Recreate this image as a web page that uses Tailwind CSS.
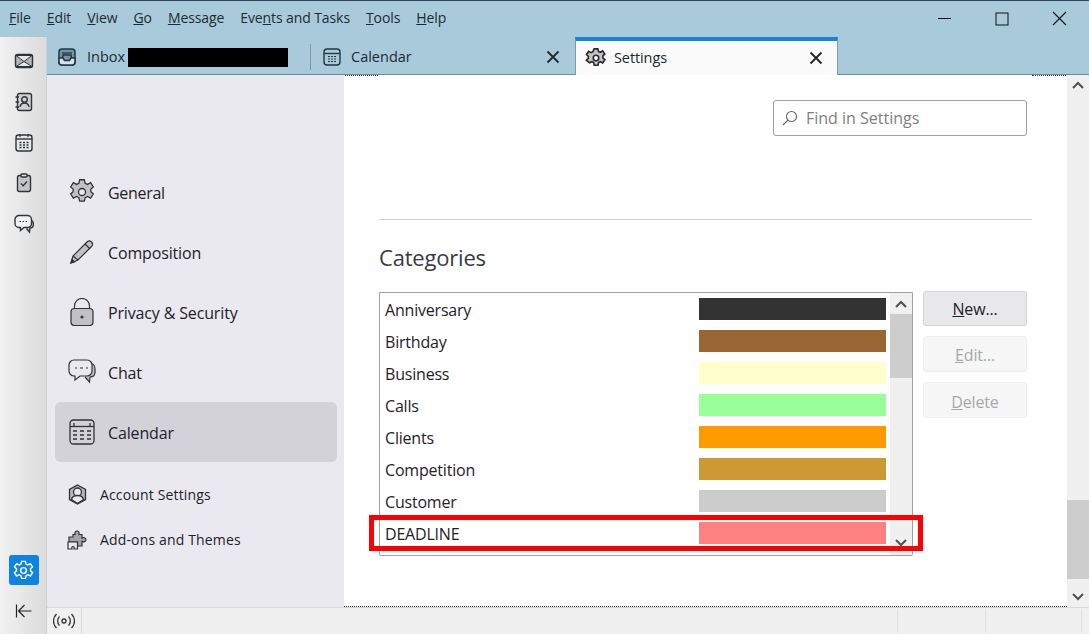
<!doctype html>
<html>
<head>
<meta charset="utf-8">
<script src="https://cdn.jsdelivr.net/npm/@tailwindcss/browser@4"></script>
</head>
<body class="w-[1089px] h-[634px] overflow-hidden bg-white font-['Open_Sans',sans-serif] text-[#1f2128]">
<div class="relative flex flex-col h-[634px]">
    <!-- title bar with menu -->
    <div class="flex items-center h-[37px] shrink-0 bg-[#a9cadb] border-t border-[#2e4558] pl-[9px] pb-[1px] text-[14px] text-[#1c2b33]">
        <div class="flex gap-[16px] tracking-[-0.1px] mb-[3px]">
            <span><u>F</u>ile</span>
            <span><u>E</u>dit</span>
            <span><u>V</u>iew</span>
            <span><u>G</u>o</span>
            <span><u>M</u>essage</span>
            <span>Eve<u>n</u>ts and Tasks</span>
            <span><u>T</u>ools</span>
            <span><u>H</u>elp</span>
        </div>
        <div class="ml-auto flex items-center gap-[43px] pr-[22px]">
            <svg width="16" height="16" viewBox="0 0 16 16"><path d="M2 7.500h13" stroke="#111" stroke-width="1"/></svg>
            <svg width="14" height="14" viewBox="0 0 14 14"><rect x="1" y="1" width="12" height="12" fill="none" stroke="#111"/></svg>
            <svg width="15" height="15" viewBox="0 0 15 15"><path d="M1 1l13 13M14 1L1 14" stroke="#111" stroke-width="1.100"/></svg>
        </div>
    </div>

    <div class="flex flex-1 min-h-0">
        <!-- spaces toolbar -->
        <div class="w-[47px] shrink-0 flex flex-col items-center bg-gradient-to-r from-[#f1f1f1] to-[#dcdcdc] border-r border-[#d0d0d0] pl-[1px] pt-[14px]">
            <div class="flex flex-col gap-[20.750px] text-[#2e3438]">
                <svg width="20" height="20" viewBox="0 0 20 20" fill="none" stroke="currentColor" stroke-width="1.400"><rect x="1.500" y="3.500" width="17" height="13" rx="2" fill="#b4b4b4"/><path d="M2 4.500l8 6 8-6z" fill="#e6e6e6" stroke-width="1"/><path d="M2 15.500l8-5 8 5z" fill="#e6e6e6" stroke-width="1"/></svg>
                <svg width="20" height="20" viewBox="0 0 20 20" fill="none" stroke="currentColor" stroke-width="1.400"><rect x="3.500" y="1.500" width="14" height="17" rx="2" fill="#d0d0d0"/><circle cx="10.500" cy="7.500" r="2.800"/><path d="M6 15c.5-3 2-4 4.500-4s4 1 4.500 4M1.500 5h3.500M1.500 10h3.500M1.500 15h3.500"/></svg>
                <svg width="20" height="20" viewBox="0 0 20 20" fill="none" stroke="currentColor" stroke-width="1.400"><rect x="2" y="2" width="16" height="16" rx="2.500" fill="#e8e8e8"/><path d="M2 6h16" /><path d="M6 1v3M14 1v3" stroke-width="1.200"/><path d="M5.500 9.500h2M9 9.500h2M12.500 9.500h2M5.500 12h2M9 12h2M12.500 12h2M5.500 14.500h2M9 14.500h2M12.500 14.500h2" stroke-width="1.300"/></svg>
                <svg width="20" height="20" viewBox="0 0 20 20" fill="none" stroke="currentColor" stroke-width="1.400"><rect x="3.500" y="2.500" width="13" height="16" rx="2" fill="#c4c4c4"/><rect x="7" y="1" width="6" height="3" rx="1" fill="#e0e0e0"/><path d="M7 10.500l2.200 2.200L13 8.500"/></svg>
                <svg width="20" height="20" viewBox="0 0 20 20" fill="none" stroke="currentColor" stroke-width="1.400"><path d="M17 6c1.500 1 2.500 2 2.500 4 0 2.500-1.500 4-3.500 4l-.500 4-3-3.500" fill="#c8c8c8"/><path d="M5 1.500h8.500a4 4 0 0 1 4 4v4a4 4 0 0 1-4 4H10l-3.500 3v-3H5a4 4 0 0 1-4-4v-4a4 4 0 0 1 4-4z" fill="#f2f2f2"/><path d="M5.500 7.500h1.500M8.500 7.500h1.500M11.500 7.500h1.500" stroke-width="1.200"/></svg>
            </div>
            <div class="mt-auto flex items-center justify-center w-[30px] h-[30px] rounded-[3px] bg-[#0d84e3]">
                <svg width="23" height="23" viewBox="0 0 24 24" fill="none" stroke="#fff" stroke-width="1.500"><path d="M10 2.500h4l.6 2.800 2 .9 2.500-1.400 2.300 3.400-2.100 2 .1 2.200 2.100 1.900-2.300 3.400-2.600-1.300-1.900 1-.7 2.800h-4l-.7-2.800-1.900-1-2.600 1.300-2.300-3.400 2.100-1.900.1-2.200-2.100-2 2.300-3.400 2.500 1.400 2-.9z"/><circle cx="12" cy="12" r="3"/></svg>
            </div>
            <div class="h-[49px] pt-[2px] flex items-center justify-center">
                <svg width="18" height="16" viewBox="0 0 18 16" fill="none" stroke="#222" stroke-width="1.200"><path d="M1.500 1.500v13M16.500 8H3.500M9.500 2L3.500 8l6 6"/></svg>
            </div>
        </div>

        <div class="flex flex-col flex-1 min-w-0">
            <!-- tab bar -->
            <div class="flex h-[38px] shrink-0 bg-[#a9cadb] border-b border-[#6f8a99] text-[14.500px] text-[#1c2b33]">
                <div class="w-[263px] flex items-center pl-[11px] pt-[2px]">
                    <svg width="18" height="18" viewBox="0 0 18 18" fill="none" stroke="#263640" stroke-width="1.500"><rect x="1" y="1" width="16" height="16" rx="3" fill="#6f95a8"/><path d="M4 5h10" stroke-width="1.300"/><path d="M1 10h4l1.500 2.500h5L13 10h4v4a3 3 0 0 1-3 3H4a3 3 0 0 1-3-3z" fill="#d6e5ec"/><path d="M4.500 10l.5-3h8l.5 3"/></svg>
                    <span class="ml-[11px]">Inbox</span>
                    <span class="ml-[3px] w-[160px] h-[19px] mt-[1px] bg-black"></span>
                </div>
                <div class="w-[265px] flex items-center pl-[12px] pr-[15px] pt-[2px]">
                    <span class="w-px h-[26px] bg-[#7d98a6] -ml-[12px] mr-[12px]"></span>
                    <svg width="18" height="18" viewBox="0 0 18 18" fill="none" stroke="#263640" stroke-width="1.400"><rect x="1" y="1" width="16" height="16" rx="3"/><path d="M1 5.500h16"/><path d="M5 8.500h2M8 8.500h2M11 8.500h2M5 11h2M8 11h2M11 11h2M5 13.500h2M8 13.500h2M11 13.500h2" stroke-width="1.100"/></svg>
                    <span class="ml-[10px]">Calendar</span>
                    <svg class="ml-auto" width="14" height="14" viewBox="0 0 14 14"><path d="M1.500 1.500l11 11M12.500 1.500l-11 11" stroke="#1c2b33" stroke-width="1.800"/></svg>
                </div>
                <div class="w-[263px] h-[38px] flex items-center pl-[9px] pr-[14px] bg-[#fafafa] border-t-[4px] border-t-[#1582e0] border-x border-x-[#7d98a6]">
                    <svg class="-mt-[1px]" width="22" height="22" viewBox="0 0 24 24" fill="#c4c4c6" stroke="#2a2a2e" stroke-width="1.800"><path d="M10 2h4l.7 2.800 2 .9 2.500-1.400 2.400 3.400-2.100 2 .1 2.300 2.100 1.900-2.400 3.400-2.600-1.300-1.900 1-.7 2.900h-4l-.7-2.900-1.900-1-2.600 1.300L1.500 14.400l2.100-1.900.1-2.300-2.100-2 2.400-3.400 2.500 1.400 2-.9z"/><circle cx="12" cy="12" r="3" fill="#fff"/></svg>
                    <span class="ml-[7px] -mt-[1px] tracking-[-0.1px]">Settings</span>
                    <svg class="ml-auto" width="14" height="14" viewBox="0 0 14 14"><path d="M1.500 1.500l11 11M12.500 1.500l-11 11" stroke="#222" stroke-width="1.800"/></svg>
                </div>
            </div>

            <div class="flex flex-1 min-h-0">
                <!-- settings nav -->
                <div class="w-[297px] shrink-0 bg-[#e9e9ef] pl-[8px] pr-[7px] pt-[87px] text-[16px] tracking-[-0.15px]">
                    <div class="flex items-center h-[60px] pl-[13px] gap-[12px]">
                        <svg width="28" height="30" viewBox="0 0 24 24" fill="#c0c0c5" stroke="#333" stroke-width="1.100"><path d="M10 1.500h4l.7 3 2 1 2.700-1.500 2.300 3.600-2.200 2 .1 2.200 2.100 1.900-2.300 3.600-2.700-1.400-2 1-.7 3h-4l-.7-3-2-1-2.700 1.400-2.300-3.600 2.100-1.900.1-2.200-2.200-2L4.600 4l2.700 1.500 2-1z"/><circle cx="12" cy="12" r="3" fill="#e9e9ef"/></svg>
                        <span class="pt-[2px] tracking-[-0.3px]">General</span>
                    </div>
                    <div class="flex items-center h-[60px] pl-[14px] gap-[13px]">
                        <svg width="26" height="26" viewBox="0 0 26 26" fill="#c0c0c5" stroke="#333" stroke-width="1.200"><path d="M2 24l2-7L18 3c1.500-1.500 3-1.500 4.500 0s1.500 3 0 4.500L9 21z"/><path d="M16 5l5 5M4 17l5 4"/><path d="M2 24l1-3.500 2.500 2.500z" fill="#333"/></svg>
                        <span class="pt-[2px]">Composition</span>
                    </div>
                    <div class="flex items-center h-[60px] pl-[15px] gap-[14px]">
                        <svg width="24" height="28" viewBox="0 0 24 28" fill="none" stroke="#333" stroke-width="1.200"><path d="M4.500 11V8a7.500 7.500 0 0 1 15 0v3"/><rect x="1" y="10.500" width="22" height="17" rx="3.500" fill="#c0c0c5"/><circle cx="12" cy="19" r="1" fill="#333"/></svg>
                        <span class="pt-[2px]">Privacy &amp; Security</span>
                    </div>
                    <div class="flex items-center h-[60px] pl-[13px] gap-[12px]">
                        <svg width="28" height="26" viewBox="0 0 28 26" fill="none" stroke="#333" stroke-width="1.200"><path d="M21 4c4 0 6 2 6 6v3c0 3-1.500 5-5 5l-.500 5-4.500-5" fill="#c0c0c5"/><path d="M6 1h13a5 5 0 0 1 5 5v6a5 5 0 0 1-5 5h-7l-5 4v-4H6a5 5 0 0 1-5-5V6a5 5 0 0 1 5-5z" fill="#e9e9ef"/><path d="M7 9h2M12 9h3M18 9h2"/></svg>
                        <span class="pt-[2px]">Chat</span>
                    </div>
                    <div class="flex items-center h-[60px] pl-[14px] gap-[13px] rounded-[6px] bg-[#d2d2d8]">
                        <svg width="26" height="26" viewBox="0 0 26 26" fill="none" stroke="#333" stroke-width="1.300"><rect x="1" y="1" width="24" height="24" rx="3.500"/><path d="M1 7.500h24"/><path d="M5 4v3M21 4v3"/><path d="M4 12h4M11 12h4M18 12h4M4 16h4M11 16h4M18 16h4M4 20h4M11 20h4M18 20h4"/></svg>
                        <span class="pt-[2px]">Calendar</span>
                    </div>
                    <div class="mt-[10px] text-[14px] tracking-[0.15px]">
                        <div class="flex items-center h-[45px] pl-[13px] gap-[13px]">
                            <svg width="19" height="21" viewBox="0 0 19 21" fill="none" stroke="#333" stroke-width="1.300"><path d="M9.500 1l8 4.500v10L9.500 20l-8-4.500v-10z" fill="#b8b8bd"/><circle cx="9.500" cy="8" r="4" fill="#e9e9ef"/><path d="M3.500 15.500c.5-2.500 3-4 6-4s5.500 1.500 6 4l-6 4z" fill="#e9e9ef"/></svg>
                            <span>Account Settings</span>
                        </div>
                        <div class="flex items-center h-[45px] pl-[12px] gap-[13px]">
                            <svg width="20" height="20" viewBox="0 0 20 20" stroke="#333" stroke-width="1.200"><path d="M2 7h4V4.500h2C7.500 2.500 8.500 1 10 1s2.500 1.500 2 3.500h3V8c1.500-.8 4-.3 4 1.700s-2.500 2.500-4 1.700V16h-4.500v-4H2z" fill="#a4a4a9"/><path d="M1 12h9.500v7H7c.5-1.500 0-2.500-1-2.500s-1.500 1-1 2.500H1z" fill="#e9e9ef"/></svg>
                            <span>Add-ons and Themes</span>
                        </div>
                    </div>
                </div>

                <!-- settings content -->
                <div class="relative flex-1 min-w-0 flex">
                    <div class="absolute left-[1px] top-0 w-[33px] border-t border-dotted border-[#444]"></div>
                    <div class="absolute left-[688px] top-0 w-[34px] border-t border-dotted border-[#444]"></div>
                    <div class="flex-1 min-w-0 pt-[25px] pl-[35px] pr-[35px] border-b border-dotted border-[#333]">
                        <div class="flex justify-end pr-[5px]">
                            <div class="w-[254px] h-[36px] flex items-center pl-[7px] gap-[8px] border border-[#a0a0a0] rounded-[3px] text-[16px] text-[#808080] tracking-[0px]">
                                <svg width="17" height="17" viewBox="0 0 17 17" fill="none" stroke="#666" stroke-width="1.100"><circle cx="10.500" cy="6.500" r="5"/><path d="M7 10L2 15"/></svg>
                                <span>Find in Settings</span>
                            </div>
                        </div>
                        <div class="mt-[83px] border-t border-[#cfcfcf]"></div>
                        <div class="mt-[22px] text-[22px] leading-[30px] text-[#3a3a40] tracking-[-0.2px]">Categories</div>
                        <div class="flex mt-[19px] text-[16px] tracking-[-0.2px]">
                            <div class="w-[534px] h-[264px] mt-[1px] flex border border-[#a0a0a0] rounded-b-[2px] overflow-hidden">
                                <div class="flex-1 min-w-0">
                                    <div class="flex items-center h-[32px] pl-[5px] pr-[4px]"><span class="flex-1 pt-[1px]">Anniversary</span><span class="w-[187px] h-[22px] bg-[#333333]"></span></div>
                                    <div class="flex items-center h-[32px] pl-[5px] pr-[4px]"><span class="flex-1 pt-[1px]">Birthday</span><span class="w-[187px] h-[22px] bg-[#996633]"></span></div>
                                    <div class="flex items-center h-[32px] pl-[5px] pr-[4px]"><span class="flex-1 pt-[1px]">Business</span><span class="w-[187px] h-[22px] bg-[#ffffcc]"></span></div>
                                    <div class="flex items-center h-[32px] pl-[5px] pr-[4px]"><span class="flex-1 pt-[1px]">Calls</span><span class="w-[187px] h-[22px] bg-[#99ff99]"></span></div>
                                    <div class="flex items-center h-[32px] pl-[5px] pr-[4px]"><span class="flex-1 pt-[1px]">Clients</span><span class="w-[187px] h-[22px] bg-[#ff9900]"></span></div>
                                    <div class="flex items-center h-[32px] pl-[5px] pr-[4px]"><span class="flex-1 pt-[1px]">Competition</span><span class="w-[187px] h-[22px] bg-[#cc9933]"></span></div>
                                    <div class="flex items-center h-[32px] pl-[5px] pr-[4px]"><span class="flex-1 pt-[1px]">Customer</span><span class="w-[187px] h-[22px] bg-[#cccccc]"></span></div>
                                    <div class="flex items-center h-[32px] pl-[5px] pr-[4px]"><span class="flex-1 pt-[1px]">DEADLINE</span><span class="w-[187px] h-[22px] bg-[#ff8080]"></span></div>
                                </div>
                                <!-- list scrollbar -->
                                <div class="w-[22px] shrink-0 flex flex-col bg-[#f0f0f0]">
                                    <div class="h-[21px] flex items-center justify-center">
                                        <svg width="12" height="8" viewBox="0 0 12 8" fill="none" stroke="#505050" stroke-width="2"><path d="M1 7l5-5 5 5"/></svg>
                                    </div>
                                    <div class="h-[64px] bg-[#cdcdcd]"></div>
                                    <div class="mt-auto h-[22px] pb-[2px] flex items-center justify-center">
                                        <svg width="12" height="8" viewBox="0 0 12 8" fill="none" stroke="#505050" stroke-width="2"><path d="M1 1l5 5 5-5"/></svg>
                                    </div>
                                </div>
                            </div>
                            <div class="ml-[10px] w-[104px] flex flex-col gap-[10px] tracking-[-0.15px]">
                                <div class="h-[35px] flex items-center justify-center rounded-[3px] border border-[#d4d4d4] bg-[#e8e8ea]"><span><u>N</u>ew...</span></div>
                                <div class="h-[36px] flex items-center justify-center rounded-[3px] border border-[#efefef] bg-[#f6f6f7] text-[#a8a8a8]"><span class="pt-[2px]"><u>E</u>dit...</span></div>
                                <div class="h-[36px] flex items-center justify-center rounded-[3px] border border-[#efefef] bg-[#f6f6f7] text-[#a8a8a8]"><span class="pt-[4px]"><u>D</u>elete</span></div>
                            </div>
                        </div>
                    </div>
                    <!-- page scrollbar -->
                    <div class="w-[22px] shrink-0 flex flex-col bg-[#f0f0f0]">
                        <div class="h-[20px] flex items-center justify-center">
                            <svg width="12" height="8" viewBox="0 0 12 8" fill="none" stroke="#505050" stroke-width="2"><path d="M1 7l5-5 5 5"/></svg>
                        </div>
                        <div class="mt-[405px] h-[79px] bg-[#cdcdcd]"></div>
                        <div class="mt-auto h-[20px] flex items-center justify-center">
                            <svg width="12" height="8" viewBox="0 0 12 8" fill="none" stroke="#505050" stroke-width="2"><path d="M1 1l5 5 5-5"/></svg>
                        </div>
                    </div>
                </div>
            </div>

            <!-- status bar -->
            <div class="flex h-[27px] shrink-0 bg-[#f0f0f0] border-t border-[#d8d8d8]">
                <div class="w-[35px] flex items-center justify-center border-r border-[#dcdcdc]">
                    <svg width="22" height="16" viewBox="0 0 22 16" fill="none" stroke="#333" stroke-width="1.300"><circle cx="11" cy="8" r="2"/><path d="M6.500 3.500c-2.500 2.500-2.500 6.500 0 9M15.500 3.500c2.500 2.500 2.500 6.500 0 9M3.500 1c-4 4-4 10 0 14M18.500 1c4 4 4 10 0 14"/></svg>
                </div>
                <div class="ml-auto w-[88px] border-l border-[#e0e0e0] my-[1px]"></div>
                <div class="w-[96px] border-l border-[#e0e0e0] my-[1px]"></div>
                <div class="w-[8px] border-l border-[#e0e0e0] my-[1px]"></div>
            </div>
        </div>
    </div>

    <!-- red highlight drawn over the list -->
    <div class="absolute left-[369px] top-[515px] w-[554px] h-[36px] border-[5px] border-[#ff0000]"></div>
</div>
</body>
</html>
